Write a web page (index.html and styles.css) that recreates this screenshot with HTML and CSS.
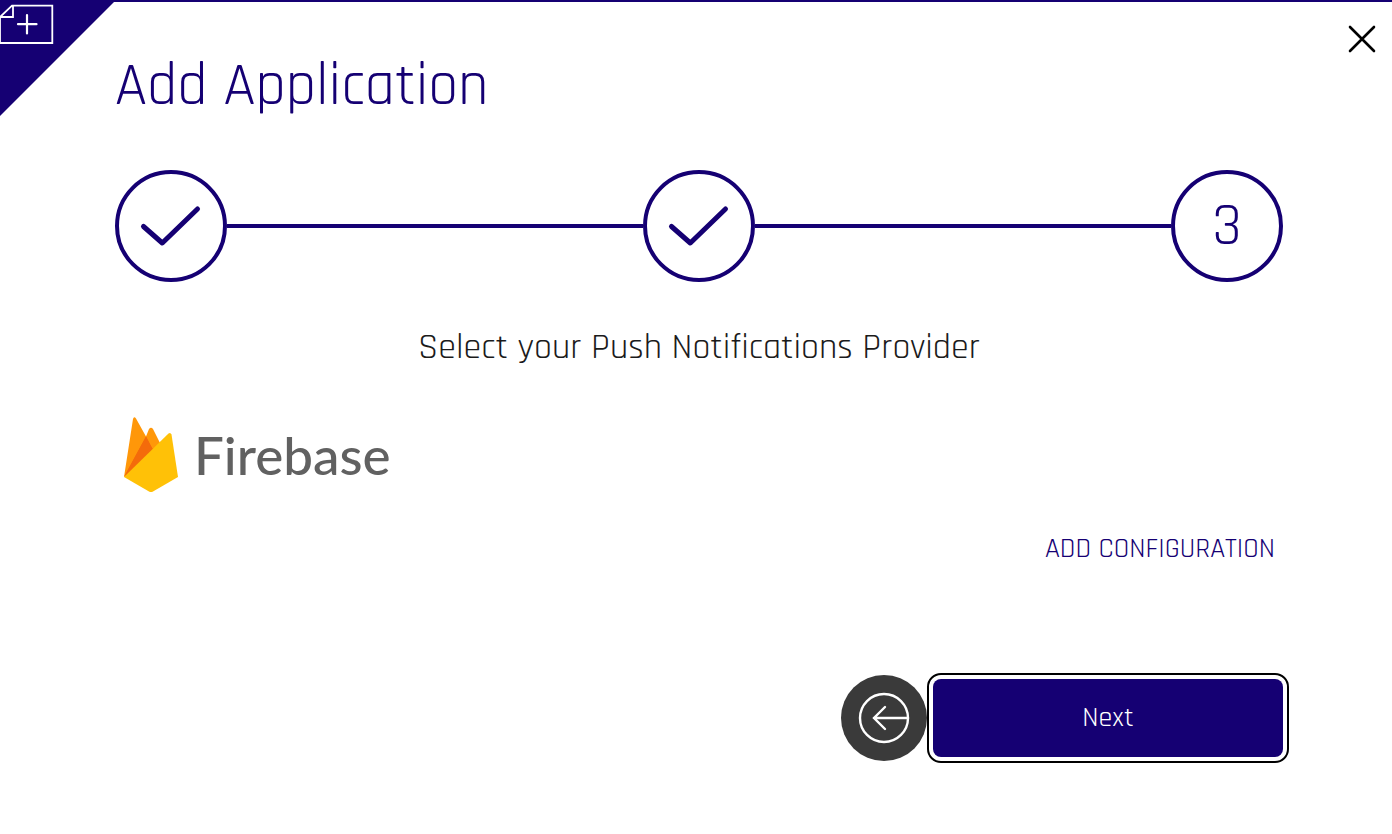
FILE: index.html
```html
<!DOCTYPE html>
<html lang="en">
<head>
<meta charset="utf-8">
<meta name="viewport" content="width=device-width, initial-scale=1">
<title>Add Application</title>
<link rel="stylesheet" href="styles.css">
</head>
<body>
<div class="dialog">
  <svg class="corner" viewBox="0 0 116 116" aria-hidden="true">
    <path d="M0 0H116L0 116Z" fill="#150073"/>
    <g fill="none" stroke="#fff" stroke-width="2">
      <path d="M0 17L12 5.700H52.300V43H0V17H13V6" stroke-width="1.800"/>
      <path d="M18 24.200H36.500M27 15V33.500" stroke-width="2.200" stroke-linecap="round"/>
    </g>
  </svg>
  <button class="close" type="button" aria-label="Close">
    <svg viewBox="0 0 28 28" aria-hidden="true"><path d="M2 2L26 26M26 2L2 26" fill="none" stroke="#000" stroke-width="2.600" stroke-linecap="round"/></svg>
  </button>
  <main class="wizard">
    <h1 class="title">Add Application</h1>
    <ol class="steps">
      <li class="step" aria-label="Step 1 complete"><svg class="check" viewBox="0 0 104 104" aria-hidden="true"><path d="M24.500 52.500L43.300 69L78.500 35"/></svg></li>
      <li class="line" role="presentation"></li>
      <li class="step" aria-label="Step 2 complete"><svg class="check" viewBox="0 0 104 104" aria-hidden="true"><path d="M24.500 52.500L43.300 69L78.500 35"/></svg></li>
      <li class="line" role="presentation"></li>
      <li class="step" aria-current="step">3</li>
    </ol>
    <h2 class="prompt">Select your Push Notifications Provider</h2>
    <div class="provider">
      <svg class="flame" viewBox="0 0 54 76" aria-hidden="true">
        <path d="M0 60L9 2Q10 -1 12 1.500L22 19.500L25 12Q27 9.500 29 12L37 28Z" fill="#ff9709"/>
        <path d="M0 60L22 19.500L28 31L34 35Z" fill="#f46b0b"/>
        <path d="M22 19.500L28 31L0 60Z" fill="#f46b0b"/>
        <path d="M0 60L44.500 16.500Q46.500 15 47.500 17.500L54 60L29 74.500Q27 75.500 25 74.500Z" fill="#ffc107"/>
      </svg>
      <span class="wordmark">Firebase</span>
    </div>
    <div class="config"><a class="config-link" href="#configuration">ADD CONFIGURATION</a></div>
    <div class="actions">
      <button class="back" type="button" aria-label="Back">
        <svg viewBox="0 0 86 86" aria-hidden="true"><g fill="none" stroke="#fff" stroke-width="2.400"><circle cx="43" cy="43" r="24"/><path d="M67 43H33M44 32L33 43L44 54" stroke-linecap="round"/></g></svg>
      </button>
      <button class="next" type="button">Next</button>
    </div>
  </main>
</div>
</body>
</html>
```
FILE: styles.css
```css
* { box-sizing: border-box; }
body {
  margin: 0;
  background: #fff;
  color: #1b1b1b;
  font-family: Rajdhani, Roboto, "Liberation Sans", sans-serif;
  font-weight: 400;
}
button { padding: 0; border: 0; font: inherit; cursor: pointer; }
svg { display: block; }
.dialog {
  position: relative;
  min-height: 100vh;
  border-top: 2px solid #150073;
}
.corner { position: absolute; top: -2px; left: 0; width: 116px; height: 116px; }
.close { position: absolute; top: 23px; right: 16px; width: 28px; background: none; }
.wizard { padding: 53px 109px 72px 115px; }
.title {
  margin: 0;
  color: #150073;
  font-size: 60px;
  font-weight: 400;
  line-height: 64px;
}
.steps {
  display: flex;
  align-items: center;
  margin: 51px 0 0;
  padding: 0;
  list-style: none;
}
.step {
  display: flex;
  flex: none;
  align-items: center;
  justify-content: center;
  width: 112px;
  height: 112px;
  border: 4px solid #150073;
  border-radius: 50%;
  color: #150073;
  font-size: 60px;
}
.line { flex: 1; height: 4px; background: #150073; }
.check {
  width: 104px;
  fill: none;
  stroke: #150073;
  stroke-width: 5;
  stroke-linecap: round;
  stroke-linejoin: round;
}
.prompt {
  margin: 46px 0 0;
  font-size: 36px;
  font-weight: 400;
  line-height: 40px;
  text-align: center;
}
.provider {
  display: flex;
  align-items: center;
  gap: 16px;
  height: 78px;
  margin-top: 48px;
  padding-left: 9px;
}
.flame { width: 54px; height: 76px; }
.wordmark { color: #616161; font-family: Lato, sans-serif; font-size: 53px; font-weight: 500; line-height: 78px; }
.config { margin-top: 39px; padding-right: 8px; text-align: right; }
.config-link { color: #150073; font-size: 28px; line-height: 32px; text-decoration: none; }
.actions {
  display: flex;
  align-items: center;
  justify-content: flex-end;
  gap: 6px;
  margin-top: 110px;
}
.back { width: 86px; height: 86px; border-radius: 50%; background: #3a3a3a; }
.next {
  width: 350px;
  height: 78px;
  border-radius: 8px;
  outline: 2px solid #000;
  outline-offset: 4px;
  background: #150073;
  color: #fff;
  font-size: 28px;
}
```
